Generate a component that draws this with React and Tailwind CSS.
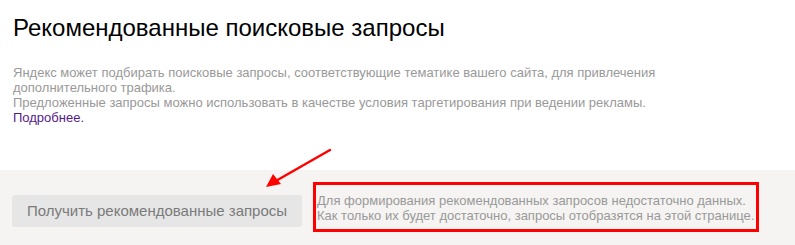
import React from 'react';

const Arrow = () => (
  <svg className="absolute left-[260px] top-[144px]" width="80" height="50" viewBox="0 0 80 50">
    <line x1="70" y1="6" x2="14" y2="38" stroke="#ff0000" strokeWidth="2.5" strokeLinecap="round" />
    <polygon points="6,43 13,30 21,40" fill="#ff0000" />
  </svg>
);

const App = () => {
  return (
    <div className="relative w-[795px] h-[245px] bg-white font-['Liberation_Sans',Arial,sans-serif] overflow-hidden">
      <div className="h-[170px] px-[13px] pt-[13px]">
        <h1 className="text-[24px] leading-[30px] text-black">Рекомендованные поисковые запросы</h1>
        <div className="mt-[22px] text-[13px] leading-[15px] text-[#999]">
          <p>Яндекс может подбирать поисковые запросы, соответствующие тематике вашего сайта, для привлечения<br />дополнительного трафика.</p>
          <p>Предложенные запросы можно использовать в качестве условия таргетирования при ведении рекламы.</p>
          <a href="#" className="text-[#551a8b]">Подробнее.</a>
        </div>
      </div>
      <div className="h-[75px] bg-[#f5f4f2] flex items-start pl-[12px] pt-[12px]">
        <button className="mt-[13px] w-[290px] h-[32px] rounded-[3px] bg-[#e6e6e6] text-[15px] text-[#7a7a7a]">
          Получить рекомендованные запросы
        </button>
        <div className="ml-[11px] w-[446px] h-[50px] border-[3px] border-[#ff0000] pl-[1px] pt-[8px] text-[13px] leading-[15px] text-[#999] whitespace-nowrap">
          Для формирования рекомендованных запросов недостаточно данных.<br />
          Как только их будет достаточно, запросы отобразятся на этой странице.
        </div>
      </div>
      <Arrow />
    </div>
  );
};

export default App;
